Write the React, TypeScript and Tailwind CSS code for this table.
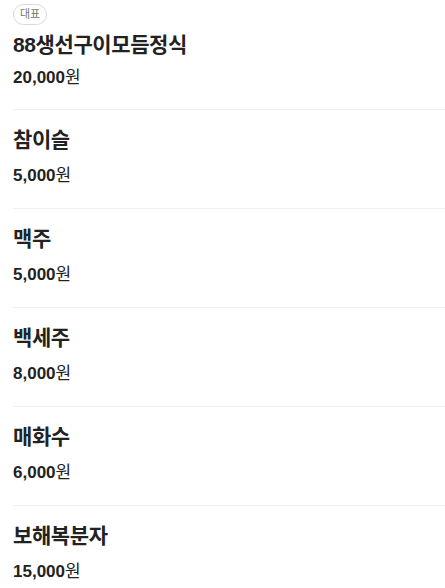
const menus = [
  { name: "88생선구이모듬정식", price: "20,000", main: true },
  { name: "참이슬", price: "5,000" },
  { name: "맥주", price: "5,000" },
  { name: "백세주", price: "8,000" },
  { name: "매화수", price: "6,000" },
  { name: "보해복분자", price: "15,000" },
];

const font = { fontFamily: '"Liberation Sans", "Noto Sans CJK KR", sans-serif' };

export default function App() {
  return (
    <div className="bg-white w-[445px] h-[588px] overflow-hidden text-[#222]" style={font}>
      <ul className="pl-[13px]">
        {menus.map((m, i) => (
          <li
            key={m.name}
            className={
              i === 0
                ? "pt-[4px] pb-[19px]"
                : "border-t border-[#f0f0f0] pt-[16px] pb-[20px]"
            }
          >
            {m.main ? (
              <div className="flex w-fit items-center h-[21px] px-[6px] rounded-full border border-[#d9d9d9] text-[11px] text-[#777] leading-none">
                대표
              </div>
            ) : null}
            <div
              className={
                m.main
                  ? "mt-[6px] text-[21px] font-bold leading-[28px] tracking-[-0.4px]"
                  : "text-[21px] font-bold leading-[28px] tracking-[-0.4px]"
              }
            >
              {m.name}
            </div>
            <div
              className={
                m.main
                  ? "mt-[7px] text-[17px] leading-[24px]"
                  : "mt-[10px] text-[17px] leading-[24px]"
              }
            >
              <span className="font-bold">{m.price}</span>원
            </div>
          </li>
        ))}
      </ul>
    </div>
  );
}
